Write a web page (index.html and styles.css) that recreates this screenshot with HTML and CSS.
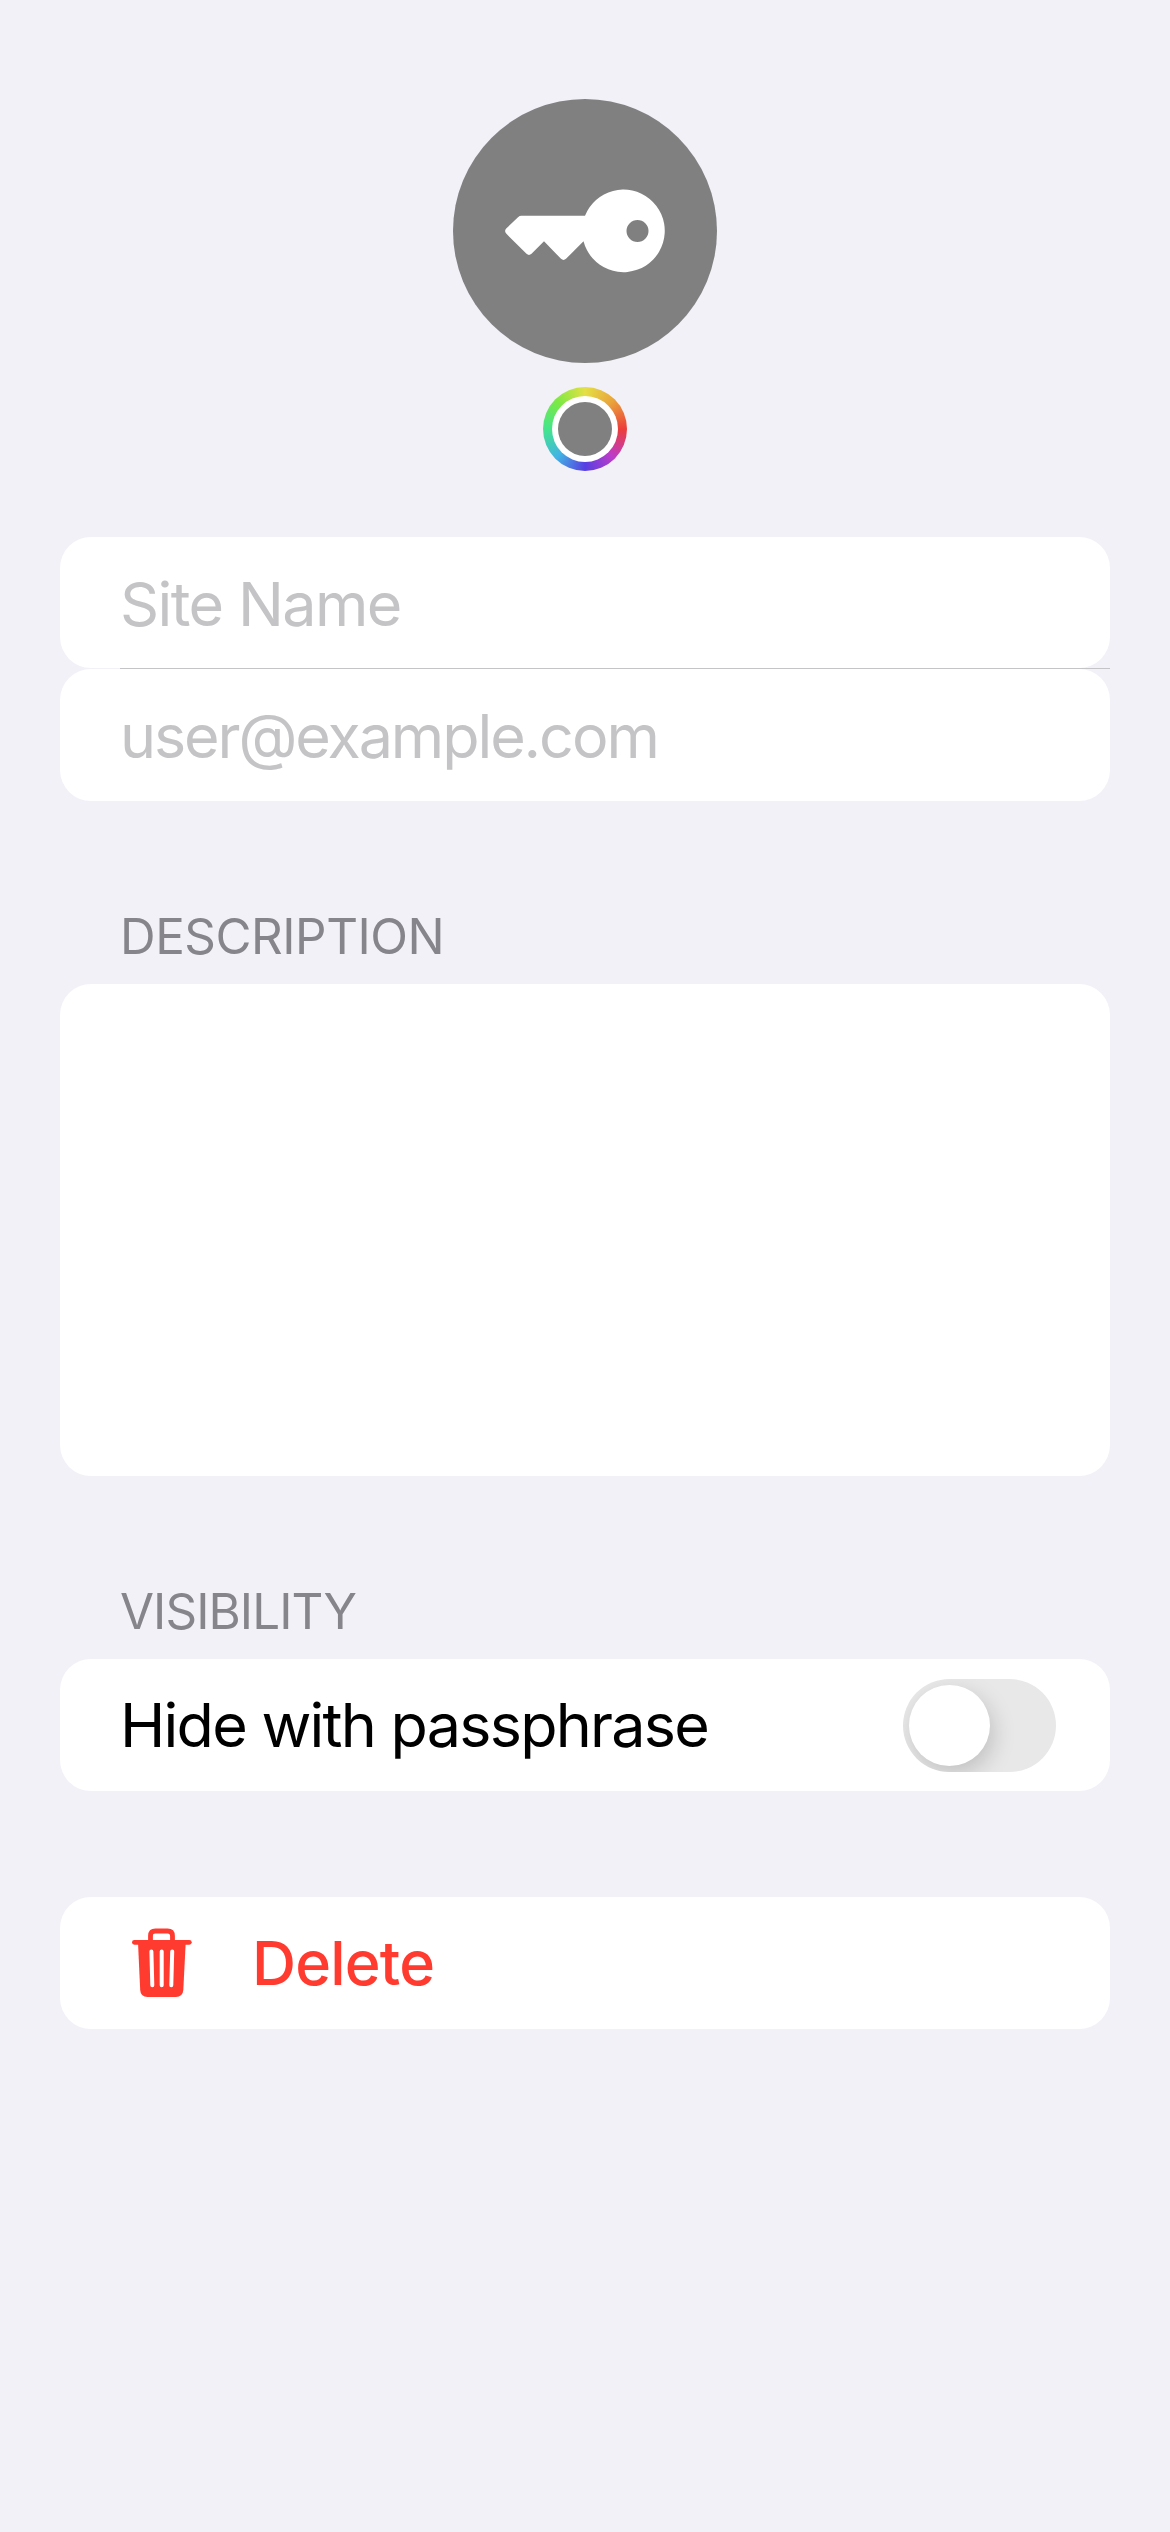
FILE: index.html
```html
<!DOCTYPE html>
<html lang="en">
<head>
<meta charset="utf-8">
<title>Site</title>
<link rel="stylesheet" href="styles.css">
</head>
<body>
<main class="form">
  <header class="identity">
    <div class="avatar">
      <svg viewBox="0 0 264 264" aria-hidden="true">
        <path fill="#fff" fill-rule="evenodd" d="M68.500 109H132A41.300 41.300 0 1 1 130.500 134.500L113 152Q110.500 154.200 108 152L91 134.500L78.500 147Q76 149.200 73.500 147L53.200 126.800Q51 124.300 53.200 121.800L65 110.400Q66.500 109 68.500 109ZM184.500 113.200a11 11 0 1 0 0 22a11 11 0 1 0 0-22Z" transform="translate(0 7.800)"/>
      </svg>
    </div>
    <div class="color-well"><div class="color-gap"><div class="color-swatch"></div></div></div>
  </header>

  <section class="fields">
    <div class="card row"><span class="placeholder site">Site Name</span></div>
    <div class="separator"></div>
    <div class="card row"><span class="placeholder user">user@example.com</span></div>
  </section>

  <h2 class="heading description">DESCRIPTION</h2>
  <div class="card note"></div>

  <h2 class="heading visibility">VISIBILITY</h2>
  <div class="card row toggle-row">
    <span class="hide-label">Hide with passphrase</span>
    <div class="switch" role="switch" aria-checked="false"><div class="knob"></div></div>
  </div>

  <div class="card row delete-row">
    <svg class="trash" viewBox="0 0 60 70" aria-hidden="true">
      <path fill="none" stroke="#ff3b30" stroke-width="4.800" d="M18.500 14V8Q18.500 3 23.500 3H35.500Q40.500 3 40.500 8V14"/>
      <rect x="0" y="12" width="59.700" height="4.700" rx="2.350" fill="#ff3b30"/>
      <path fill="#ff3b30" d="M6 14.500H53.700L51.300 62Q50.800 68.900 43.800 68.900H15.500Q8.600 68.900 8.200 62Z"/>
      <path fill="none" stroke="#fff" stroke-width="4" stroke-linecap="round" d="M19.400 23.500L20.300 57.300M29.700 23.500V57.300M40.200 23.500L39.300 57.300"/>
    </svg>
    <span class="delete-label">Delete</span>
  </div>
</main>
</body>
</html>
```
FILE: styles.css
```css
* { box-sizing: border-box; }
body {
  margin: 0;
  background: #f2f1f7;
  font-family: Inter, "Liberation Sans", sans-serif;
  font-size: 61px;
  font-weight: 430;
  line-height: 74px;
  color: #000;
}
.form {
  min-height: 2532px;
  padding: 99px 60px 0;
  display: flex;
  flex-direction: column;
}
.identity {
  display: flex;
  flex-direction: column;
  align-items: center;
  gap: 24px;
}
.avatar {
  width: 264px;
  height: 264px;
  border-radius: 50%;
  background: #808080;
}
.avatar svg { display: block; width: 100%; height: 100%; }
.color-well {
  width: 84px;
  height: 84px;
  padding: 9px;
  border-radius: 50%;
  background: conic-gradient(#e4e044, #e9a33c 45deg, #ec3d3a 90deg, #bd3cc8 135deg, #573fe2 180deg, #42b4e4 225deg, #43e58c 270deg, #7ce943 315deg, #e4e044);
}
.color-gap {
  width: 66px;
  height: 66px;
  padding: 6px;
  border-radius: 50%;
  background: #fff;
}
.color-swatch {
  width: 54px;
  height: 54px;
  border-radius: 50%;
  background: #808080;
}
.fields { margin-top: 66px; }
.card {
  background: #fff;
  border-radius: 31px;
}
.row {
  height: 132px;
  padding: 0 60px;
  display: flex;
  align-items: center;
  white-space: nowrap;
}
.fields .row { padding-top: 2px; }
.fields .row:first-child { height: 131px; }
.separator { height: 1px; margin-left: 60px; background: #c4c4c7; }
.placeholder { color: #c4c4c6; }
.site { letter-spacing: -1.600px; }
.user { letter-spacing: -2.080px; }
.heading {
  margin: 0 0 0 60px;
  color: #86858b;
  font-size: 49.300px;
  font-weight: 400;
  line-height: 60px;
}
.description { margin-top: 105px; margin-bottom: 18px; letter-spacing: -.450px; }
.note { height: 492px; }
.visibility { margin-top: 105px; margin-bottom: 18px; letter-spacing: -.9px; }
.toggle-row { padding-right: 54px; justify-content: space-between; }
.hide-label { letter-spacing: -1.750px; }
.switch {
  width: 153px;
  height: 93px;
  padding: 6px;
  border-radius: 47px;
  background: #e8e8e8;
  overflow: hidden;
}
.knob {
  width: 81px;
  height: 81px;
  border-radius: 50%;
  background: #fff;
  box-shadow: 4px 8px 22px rgba(0, 0, 0, .17);
}
.delete-row { margin-top: 106px; padding-left: 72px; color: #ff3b30; }
.trash { width: 60px; height: 70px; }
.delete-label { margin-left: 60px; font-weight: 520; letter-spacing: -.8px; }
```
